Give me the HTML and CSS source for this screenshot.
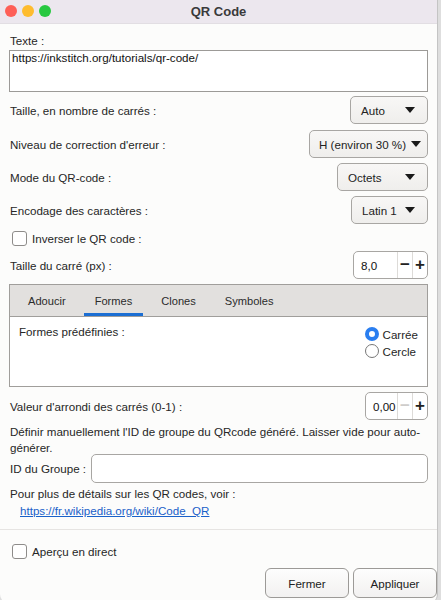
FILE: index.html
```html
<!DOCTYPE html>
<html lang="fr">
<head>
<meta charset="utf-8">
<title>QR Code</title>
<link rel="stylesheet" href="styles.css">
</head>
<body>
<div class="window">
  <div class="titlebar">
    <div class="lights">
      <span class="light red"></span>
      <span class="light yellow"></span>
      <span class="light green"></span>
    </div>
    <div class="title">QR Code</div>
  </div>
  <div class="content">
    <div class="label-line first">Texte :</div>
    <div class="textarea">https://inkstitch.org/tutorials/qr-code/</div>

    <div class="row r-first">
      <span>Taille, en nombre de carrés :</span>
      <div class="combo w-auto"><span>Auto</span><i class="arrow"></i></div>
    </div>
    <div class="row r-gap6">
      <span>Niveau de correction d'erreur :</span>
      <div class="combo w-h"><span>H (environ 30 %)</span><i class="arrow"></i></div>
    </div>
    <div class="row">
      <span>Mode du QR-code :</span>
      <div class="combo w-oct"><span>Octets</span><i class="arrow"></i></div>
    </div>
    <div class="row">
      <span>Encodage des caractères :</span>
      <div class="combo w-lat"><span>Latin 1</span><i class="arrow"></i></div>
    </div>

    <div class="check-row c-inv">
      <span class="checkbox"></span><span>Inverser le QR code :</span>
    </div>

    <div class="row r-spin1">
      <span>Taille du carré (px) :</span>
      <div class="spin w-spin1">
        <span class="spin-val">8,0</span>
        <span class="spin-btn">−</span>
        <span class="spin-btn">+</span>
      </div>
    </div>

    <div class="notebook">
      <div class="tabs">
        <span class="tab">Adoucir</span>
        <span class="tab active">Formes</span>
        <span class="tab">Clones</span>
        <span class="tab">Symboles</span>
      </div>
      <div class="tab-page">
        <span class="page-label">Formes prédéfinies :</span>
        <div class="radios">
          <div class="radio-row"><span class="radio on"></span><span>Carrée</span></div>
          <div class="radio-row"><span class="radio"></span><span>Cercle</span></div>
        </div>
      </div>
    </div>

    <div class="row r-spin2">
      <span>Valeur d'arrondi des carrés (0-1) :</span>
      <div class="spin w-spin2">
        <span class="spin-val">0,00</span>
        <span class="spin-btn dim">−</span>
        <span class="spin-btn">+</span>
      </div>
    </div>

    <p class="desc">Définir manuellement l'ID de groupe du QRcode généré. Laisser vide pour auto-générer.</p>

    <div class="id-row">
      <span>ID du Groupe :</span>
      <div class="entry"></div>
    </div>

    <div class="label-line more">Pour plus de détails sur les QR codes, voir :</div>
    <div class="label-line link-line"><a class="link" href="#">https://fr.wikipedia.org/wiki/Code_QR</a></div>
  </div>
  <div class="separator"></div>
  <div class="footer">
    <div class="check-row c-live">
      <span class="checkbox"></span><span>Aperçu en direct</span>
    </div>
    <div class="buttons">
      <span class="button b-close">Fermer</span>
      <span class="button b-apply">Appliquer</span>
    </div>
  </div>
</div>
</body>
</html>
```

FILE: styles.css
```css
* { box-sizing: border-box; }
html, body { margin: 0; padding: 0; }
body {
  background: #dedede;
  width: 441px;
  height: 600px;
  overflow: hidden;
  font-family: "Liberation Sans", Arial, sans-serif;
  font-size: 11.6px;
  color: #262626;
}
.window {
  width: 438px;
  height: 604px;
  background: #fcfcfb;
  border-right: 1px solid #c4c4c4;
  border-radius: 0 0 10px 10px;
  overflow: hidden;
}
.titlebar {
  height: 24px;
  background: #ece7ee;
  border-bottom: 1px solid #e2dee3;
  display: flex;
  align-items: center;
  justify-content: center;
  position: relative;
}
.lights {
  position: absolute;
  left: 5px;
  top: 5px;
  display: flex;
  gap: 5px;
}
.light { width: 12px; height: 12px; border-radius: 50%; display: block; }
.red { background: #fe5f57; }
.yellow { background: #febc2e; }
.green { background: #28c840; }
.title { font-weight: bold; font-size: 13px; color: #3a3a3a; }

.content { padding: 0 9px; }
.label-line { height: 16px; line-height: 16px; white-space: nowrap; }
.label-line.first { margin-top: 9px; padding-left: 1px; }
.textarea {
  margin-top: 1px;
  height: 42px;
  border: 1px solid #9c9a97;
  background: #fff;
  padding: 0 2px;
  line-height: 14px;
  color: #111;
}

.row {
  display: flex;
  justify-content: space-between;
  align-items: center;
  height: 28px;
  margin-top: 5px;
  padding-left: 1px;
  white-space: nowrap;
}
.r-first { margin-top: 4px; }
.r-gap6 { margin-top: 6px; }
.r-spin1 { margin-top: 3px; }
.r-spin2 { margin-top: 5px; }

.combo {
  height: 28px;
  border: 1px solid #a8a6a3;
  border-radius: 5px;
  background: linear-gradient(#f8f7f6, #efeeec);
  display: flex;
  align-items: center;
  justify-content: space-between;
  padding: 0 12px 0 10px;
  color: #222;
  white-space: nowrap;
}
.arrow {
  width: 0; height: 0;
  border-left: 5px solid transparent;
  border-right: 5px solid transparent;
  border-top: 6px solid #1a1a1a;
  margin-left: 5px;
  flex: none;
}
.w-auto { width: 78px; }
.w-h { width: 119px; padding-left: 9px; padding-right: 8px; }
.w-oct { width: 91px; }
.w-lat { width: 77px; }

.check-row { display: flex; align-items: center; gap: 5px; height: 20px; }
.c-inv { margin-top: 4px; padding-left: 3px; }
.checkbox {
  width: 15px; height: 15px;
  border: 1px solid #8e8c8a;
  border-radius: 3px;
  background: #fff;
  display: block;
}

.spin {
  height: 28px;
  border: 1px solid #a8a6a3;
  border-radius: 5px;
  background: #fff;
  display: flex;
  align-items: stretch;
}
.spin-val { flex: 1; display: flex; align-items: center; padding-left: 7px; color: #111; }
.spin-btn {
  width: 15px;
  border-left: 1px solid #dddbd8;
  display: flex;
  align-items: center;
  justify-content: center;
  font-size: 17px;
  font-weight: bold;
  color: #222;
}
.spin-btn.dim { color: #cfcdcb; }
.w-spin1 { width: 75px; }
.w-spin2 { width: 63px; }

.notebook {
  margin-top: 5px;
  border: 1px solid #a09e9b;
  height: 103px;
  background: #fff;
}
.tabs {
  height: 32px;
  background: #e2e0de;
  border-bottom: 1px solid #a09e9b;
  display: flex;
  gap: 7px;
  padding-left: 7px;
  font-size: 11.1px;
}
.tab {
  padding: 0 11px;
  display: flex;
  align-items: center;
  color: #2b2b2b;
  border-bottom: 3px solid transparent;
  padding-top: 3px;
}
.tab.active { border-bottom-color: #1b6ed3; }
.tab-page {
  display: flex;
  justify-content: space-between;
  padding: 8px 9px 0 9px;
}
.page-label { line-height: 14px; }
.radios { display: flex; flex-direction: column; gap: 3px; margin-top: 2px; }
.radio-row { display: flex; align-items: center; gap: 4px; height: 14px; }
.radio {
  width: 14px; height: 14px;
  border-radius: 50%;
  border: 1px solid #777;
  background: #fff;
  display: block;
}
.radio.on {
  border: 4px solid #2a7ef0;
  background: #fff;
}

.desc { margin: 4px 0 0 1px; line-height: 16px; height: 32px; }
.id-row { display: flex; align-items: center; gap: 5px; margin-top: -2px; padding-left: 1px; }
.entry {
  flex: 1;
  height: 29px;
  border: 1px solid #a8a6a3;
  border-radius: 5px;
  background: #fff;
}
.label-line.more { margin-top: 3px; padding-left: 1px; }
.link-line { margin-top: 1px; padding-left: 11px; }
.link { color: #1a61c9; text-decoration: underline; }

.separator { margin-top: 10px; border-top: 1px solid #e6e4e2; }
.footer { padding: 0 0 0 9px; }
.c-live { margin-top: 11px; padding-left: 3px; }
.buttons { display: flex; justify-content: flex-end; gap: 4px; margin-top: 7px; }
.button {
  height: 30px;
  border: 1px solid #9c9a97;
  border-radius: 6px;
  background: linear-gradient(#fdfdfd, #f2f1f0);
  display: flex;
  align-items: center;
  justify-content: center;
  color: #222;
}
.b-close { width: 84px; }
.b-apply { width: 84px; }
```
